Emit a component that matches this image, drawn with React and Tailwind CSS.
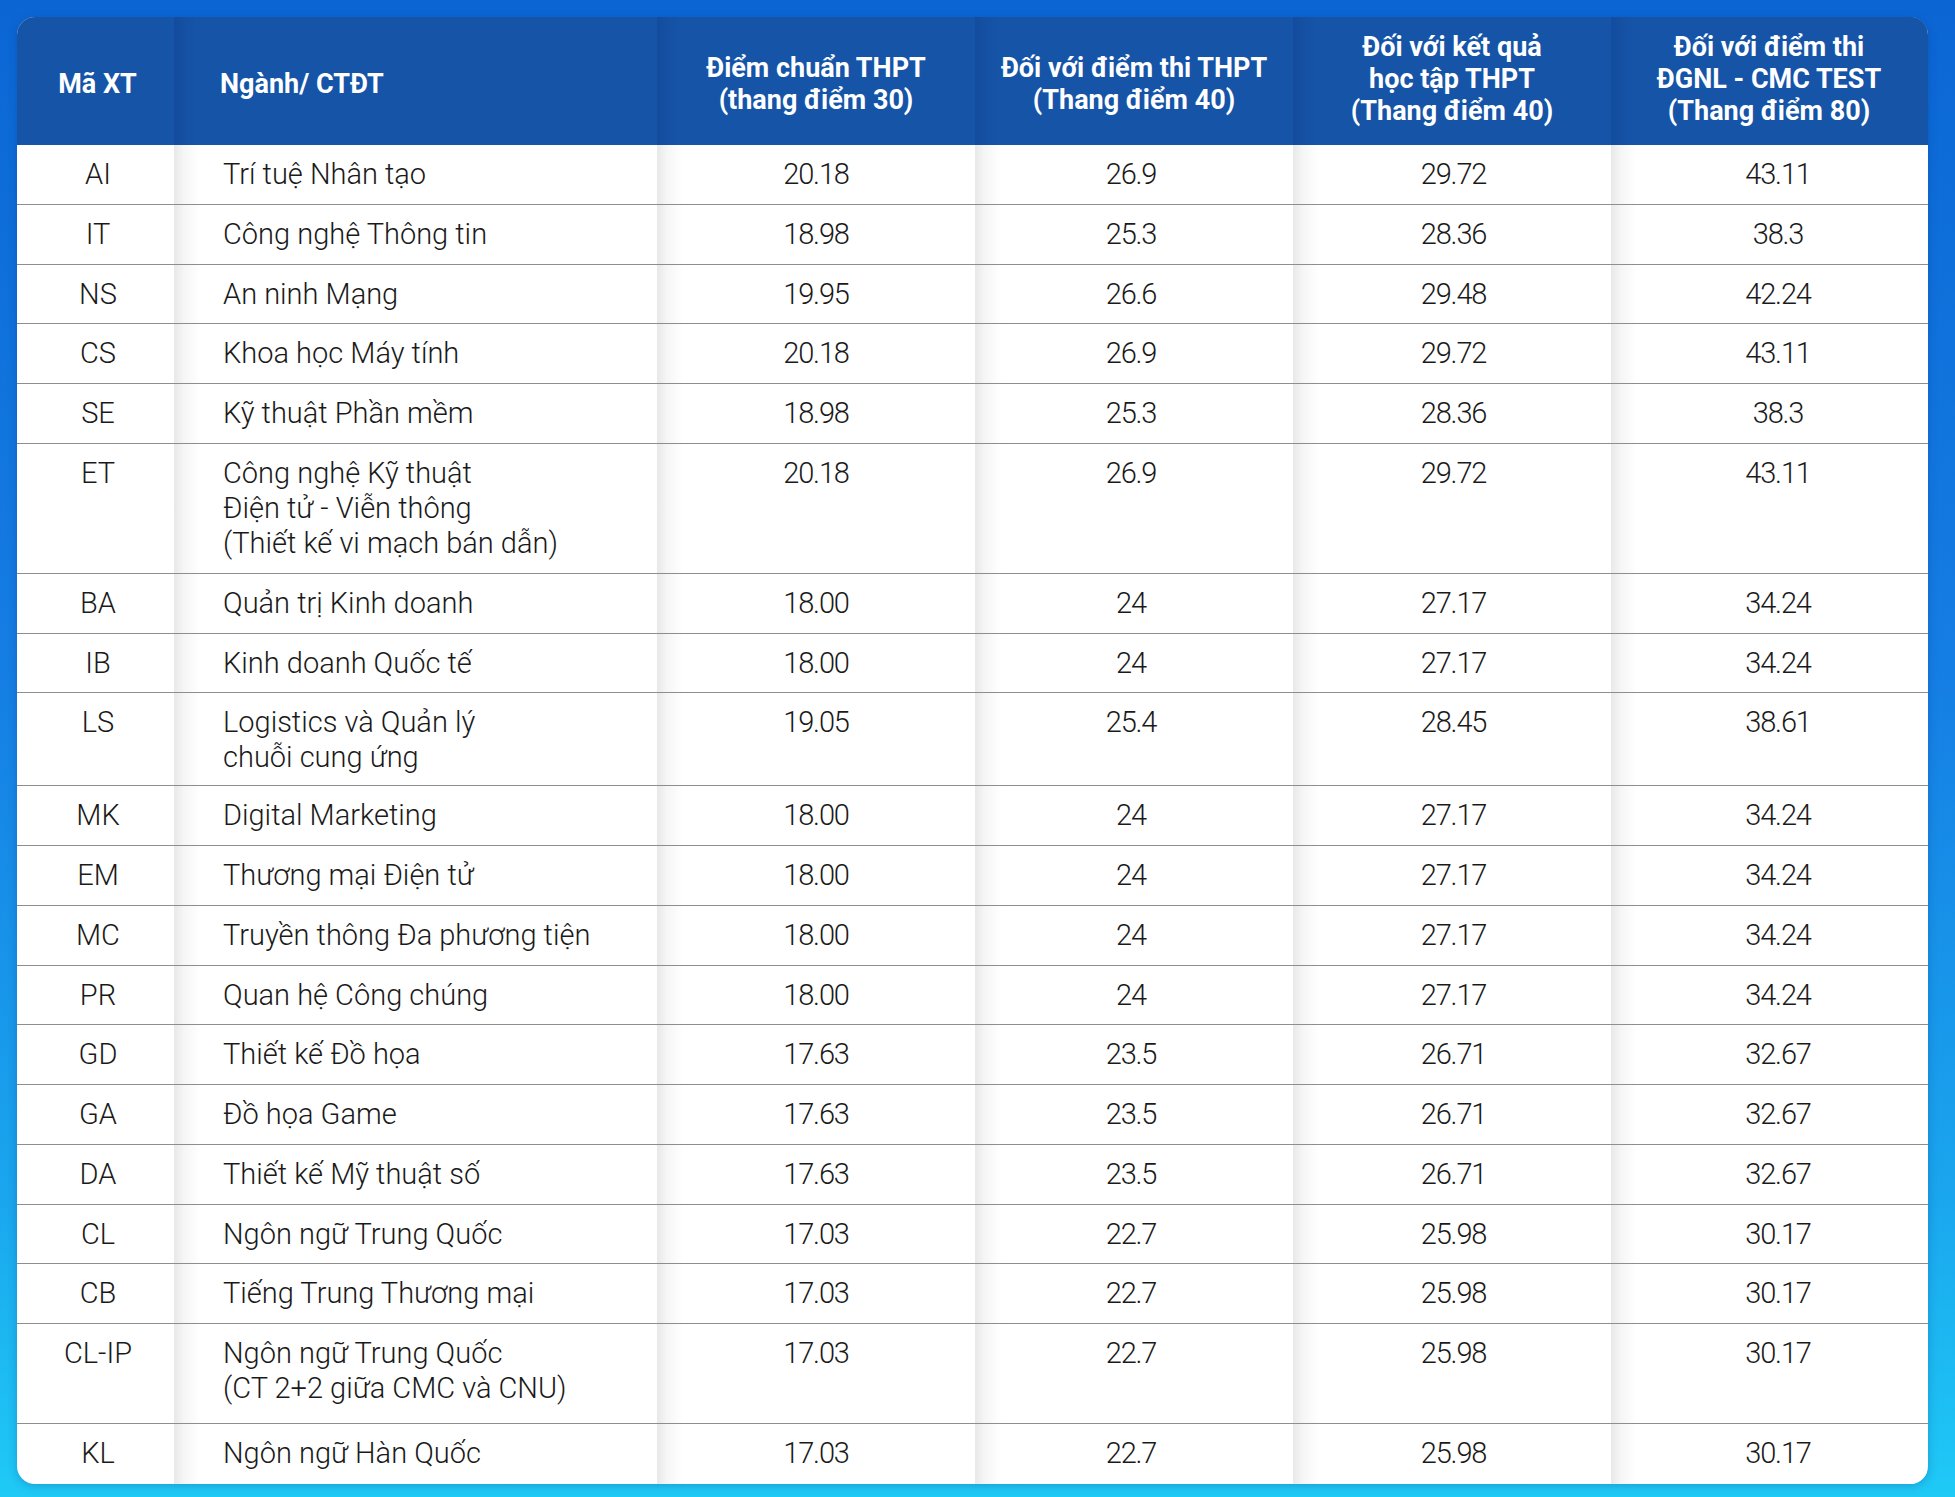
import React from "react";

const rows = [
  { c: "AI", n: ["Trí tuệ Nhân tạo"], v: ["20.18", "26.9", "29.72", "43.11"] },
  { c: "IT", n: ["Công nghệ Thông tin"], v: ["18.98", "25.3", "28.36", "38.3"] },
  { c: "NS", n: ["An ninh Mạng"], v: ["19.95", "26.6", "29.48", "42.24"] },
  { c: "CS", n: ["Khoa học Máy tính"], v: ["20.18", "26.9", "29.72", "43.11"] },
  { c: "SE", n: ["Kỹ thuật Phần mềm"], v: ["18.98", "25.3", "28.36", "38.3"] },
  {
    c: "ET",
    n: ["Công nghệ Kỹ thuật", "Điện tử - Viễn thông", "(Thiết kế vi mạch bán dẫn)"],
    v: ["20.18", "26.9", "29.72", "43.11"],
    h: "h-[130px]",
  },
  { c: "BA", n: ["Quản trị Kinh doanh"], v: ["18.00", "24", "27.17", "34.24"] },
  { c: "IB", n: ["Kinh doanh Quốc tế"], v: ["18.00", "24", "27.17", "34.24"] },
  {
    c: "LS",
    n: ["Logistics và Quản lý", "chuỗi cung ứng"],
    v: ["19.05", "25.4", "28.45", "38.61"],
    h: "h-[93px]",
  },
  { c: "MK", n: ["Digital Marketing"], v: ["18.00", "24", "27.17", "34.24"] },
  { c: "EM", n: ["Thương mại Điện tử"], v: ["18.00", "24", "27.17", "34.24"] },
  { c: "MC", n: ["Truyền thông Đa phương tiện"], v: ["18.00", "24", "27.17", "34.24"] },
  { c: "PR", n: ["Quan hệ Công chúng"], v: ["18.00", "24", "27.17", "34.24"] },
  { c: "GD", n: ["Thiết kế Đồ họa"], v: ["17.63", "23.5", "26.71", "32.67"] },
  { c: "GA", n: ["Đồ họa Game"], v: ["17.63", "23.5", "26.71", "32.67"] },
  { c: "DA", n: ["Thiết kế Mỹ thuật số"], v: ["17.63", "23.5", "26.71", "32.67"] },
  { c: "CL", n: ["Ngôn ngữ Trung Quốc"], v: ["17.03", "22.7", "25.98", "30.17"] },
  { c: "CB", n: ["Tiếng Trung Thương mại"], v: ["17.03", "22.7", "25.98", "30.17"] },
  {
    c: "CL-IP",
    n: ["Ngôn ngữ Trung Quốc", "(CT 2+2 giữa CMC và CNU)"],
    v: ["17.03", "22.7", "25.98", "30.17"],
    h: "h-[100px]",
  },
  { c: "KL", n: ["Ngôn ngữ Hàn Quốc"], v: ["17.03", "22.7", "25.98", "30.17"] },
];

const headers = [
  { l: ["Điểm chuẩn THPT", "(thang điểm 30)"], p: "pt-[5px]" },
  { l: ["Đối với điểm thi THPT", "(Thang điểm 40)"], p: "pt-[5px]" },
  { l: ["Đối với kết quả", "học tập THPT", "(Thang điểm 40)"], p: "pb-[4px]" },
  { l: ["Đối với điểm thi", "ĐGNL - CMC TEST", "(Thang điểm 80)"], p: "pb-[4px]" },
];

const numPad = ["", "pr-[6px]", "pl-[3px]", "pl-[18px]"];

const gridCols = "grid grid-cols-[157px_483px_318px_318px_318px_316px]";
const bodyShade = "bg-[linear-gradient(90deg,#e8e8e8_0px,#f6f6f6_10px,#ffffff_26px)]";
const headShade = "bg-[linear-gradient(90deg,#134c9e_0px,#1654a8_22px)]";

export default function App() {
  return (
    <div
      className="w-[1955px] h-[1497px] bg-[linear-gradient(180deg,#0b66d4_0%,#157ee4_45%,#1aa6ee_80%,#1fcaf6_100%)] pt-[17px] pl-[17px]"
      style={{ fontFamily: "Roboto, 'Liberation Sans', sans-serif" }}
    >
      <div className="w-[1911px] rounded-[18px] overflow-hidden bg-white shadow-[0_2px_10px_rgba(0,40,120,0.25)]">
        {/* Header */}
        <div className={`${gridCols} h-[128px] bg-[#1654a8] text-white font-bold text-[27px] leading-[32px]`}>
          <div className="flex items-center justify-center pt-[5px] pl-[4px]">Mã XT</div>
          <div className={`flex items-center pl-[46px] pt-[5px] ${headShade}`}>Ngành/ CTĐT</div>
          {headers.map((h, i) => (
            <div key={i} className={`flex flex-col items-center justify-center text-center ${h.p} ${headShade}`}>
              {h.l.map((l, j) => (
                <div key={j}>{l}</div>
              ))}
            </div>
          ))}
        </div>
        {/* Body */}
        {rows.map((r, i) => (
          <div
            key={r.c}
            className={`${gridCols} ${r.h ? r.h : "h-[59.75px]"} ${
              i < rows.length - 1 ? "border-b-[1.5px] border-[#8e8e8e]" : ""
            } text-[29px] leading-[35px] text-[#1a1a1a] font-light`}
          >
            <div className="pt-[12px] pl-[5px] text-center">{r.c}</div>
            <div className={`pt-[12px] pl-[49px] ${bodyShade}`}>
              {r.n.map((l, j) => (
                <div key={j}>{l}</div>
              ))}
            </div>
            {r.v.map((v, j) => (
              <div key={j} className={`pt-[12px] text-center tracking-[-0.04em] ${numPad[j]} ${bodyShade}`}>
                {v}
              </div>
            ))}
          </div>
        ))}
      </div>
    </div>
  );
}
